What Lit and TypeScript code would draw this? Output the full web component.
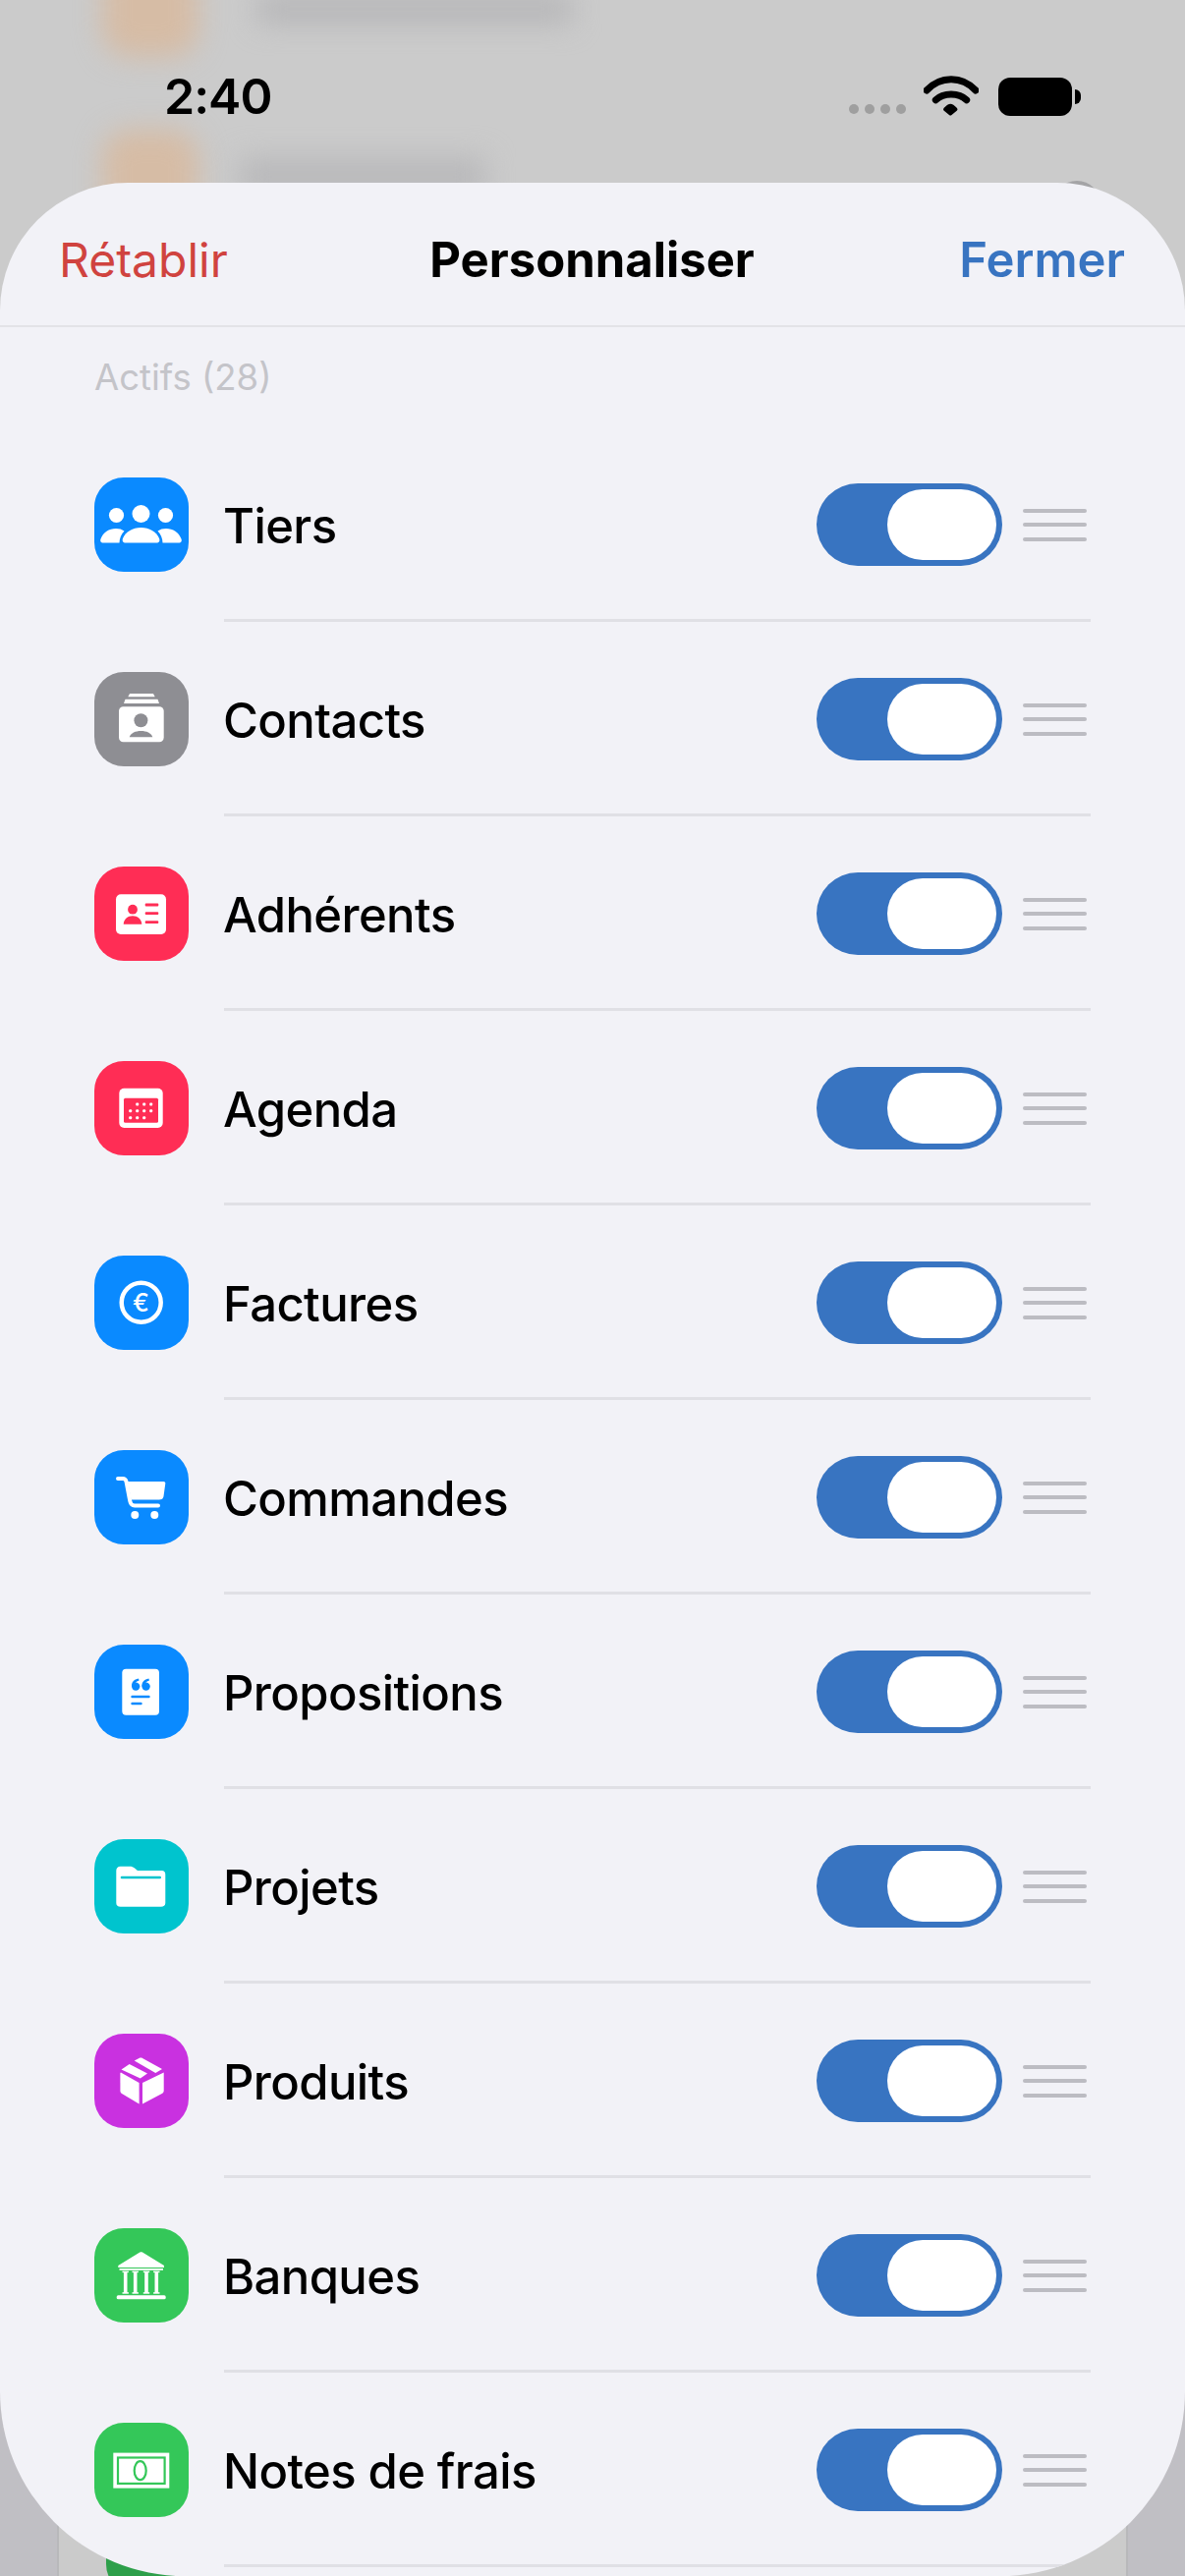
import { LitElement, css, html, svg } from "lit";
import { customElement } from "lit/decorators.js";

// Glyphs are drawn on the 96x96 tile; .cut pieces take the tile colour.
const peopleIcon = svg`
  <circle cx="47.5" cy="37" r="9"/>
  <circle cx="22.5" cy="38.5" r="7.6"/>
  <circle cx="72.5" cy="38.5" r="7.6"/>
  <path d="M32 66.5H63C66 66.5 67 64.5 66 62C63 55 56 51 47.5 51C39 51 32 55 29 62C28 64.5 29 66.5 32 66.5Z"/>
  <path d="M9 66.5H25.5C25.5 62 27.5 57.5 30.5 54.5C28 52.8 25.5 52 22 52C15 52 9 56 6.5 62.5C5.5 65 7 66.5 9 66.5Z"/>
  <path d="M86 66.5H69.5C69.5 62 67.5 57.5 64.5 54.5C67 52.8 69.5 52 73 52C80 52 86 56 88.5 62.5C89.5 65 88 66.5 86 66.5Z"/>
`;

const contactsIcon = svg`
  <path d="M36 22H60L61.7 25.3H34.3Z"/>
  <path d="M31.5 27.8H64.5L66 32H30Z"/>
  <rect x="25" y="35.3" width="45.7" height="36" rx="4.5"/>
  <circle class="cut" cx="47.4" cy="49.3" r="7"/>
  <path class="cut" d="M35.7 66.3C37 62 42 60 47.5 60C53 60 58 62 59.3 66.3Z"/>
`;

const memberCardIcon = svg`
  <rect x="22" y="28.3" width="51" height="40.7" rx="5"/>
  <circle class="cut" cx="39" cy="43.7" r="4.9"/>
  <path class="cut" d="M29.7 58.7C30 53.5 34 50.3 39 50.3C44 50.3 48 53.5 48.3 58.7Z"/>
  <rect class="cut" x="51.7" y="37.6" width="13.6" height="2.8" rx="1"/>
  <rect class="cut" x="51.7" y="46.3" width="13.6" height="2.8" rx="1"/>
  <rect class="cut" x="51.7" y="55.3" width="13.6" height="2.8" rx="1"/>
`;

const calendarDots: [number, number][] = [
  [43.7, 44], [50.7, 44], [57.7, 44],
  [36.7, 50.7], [43.7, 50.7], [50.7, 50.7], [57.7, 50.7],
  [36.7, 57.7], [43.7, 57.7], [50.7, 57.7],
];

const calendarIcon = svg`
  <rect x="25.3" y="27.7" width="44.4" height="40.3" rx="5"/>
  <rect class="cut" x="30" y="37.7" width="35" height="25" rx="1.5"/>
  ${calendarDots.map(([x, y]) => svg`<rect x=${x - 1.5} y=${y - 1.5} width="3" height="3" rx="1"/>`)}
`;

const euroIcon = svg`
  <circle class="ring" cx="47.7" cy="47.7" r="20"/>
  <text class="euro" x="47.4" y="56.5" text-anchor="middle">€</text>
`;

const cartIcon = svg`
  <path class="line" d="M24 29H29C31 29 32 30 32.5 32L36.3 52C36.9 55 38.5 56.5 41 56.5H65"/>
  <path d="M34 32H70.5C71.7 32 72.5 33 72.3 34L70.5 47C70 49.5 68.5 50.5 66 50.5H37.5Z"/>
  <circle cx="41.3" cy="66" r="4"/>
  <circle cx="61.3" cy="66" r="4"/>
`;

const quoteIcon = svg`
  <rect x="28.3" y="24.7" width="37.7" height="47" rx="4"/>
  <circle class="cut" cx="42.2" cy="42.6" r="4.2"/>
  <circle class="cut" cx="52.6" cy="42.6" r="4.2"/>
  <path class="cut" d="M38 42.6C37.8 38.4 40.2 35.4 45 34.6L45.6 36.6C42.8 37.4 41.2 39 41.2 41.5Z"/>
  <path class="cut" d="M48.4 42.6C48.2 38.4 50.6 35.4 55.4 34.6L56 36.6C53.2 37.4 51.6 39 51.6 41.5Z"/>
  <rect class="cut" x="37.3" y="51.8" width="19.4" height="2.5" rx="1.2"/>
  <rect class="cut" x="37.3" y="58.8" width="11.4" height="2.5" rx="1.2"/>
`;

const folderIcon = svg`
  <path d="M22.3 32C22.3 29.5 24 27.7 26.5 27.7H36C38 27.7 39.5 28.3 41 29.5L44 32H68.5C71 32 72.3 33.5 72.3 36V65C72.3 67.5 70.5 68.7 68 68.7H26.5C24 68.7 22.3 67.5 22.3 65Z"/>
  <rect class="cut" x="26.7" y="37.8" width="41.3" height="2.5" rx="1.2"/>
`;

const boxIcon = svg`
  <path d="M27 39.5L45.6 50V71.5L28 61C27 60.4 26.4 59.4 26.4 58.3V40Z"/>
  <path d="M70.7 39.5L49 50V71.5L68.8 61C70 60.4 70.7 59.4 70.7 58.3Z"/>
  <path d="M27.5 36.5L35.7 31L54 40.5L46.8 45.5Z"/>
  <path d="M40.7 27.5L45.5 25C46.7 24.4 48 24.4 49 25L69 36L62.3 40Z"/>
`;

const bankColumns = [31.7, 41.7, 53, 63.3];

const bankIcon = svg`
  <path d="M46.3 24.5C47.2 24 48.2 24 49 24.5L71 38V40H24.3V38Z"/>
  <rect x="25.5" y="41" width="44.5" height="1.8"/>
  ${bankColumns.map(
    (x) => svg`
      <rect x=${x - 1.8} y="44" width="3.6" height="22"/>
      <rect x=${x - 3.2} y="43.6" width="6.4" height="1.5"/>
      <rect x=${x - 3.2} y="65.2" width="6.4" height="1.5"/>
    `
  )}
  <rect x="22.7" y="68.3" width="50" height="4" rx="1.6"/>
`;

const billIcon = svg`
  <rect x="19.3" y="30.6" width="57" height="36"/>
  <rect class="cut-line" x="24" y="35.5" width="47.6" height="26.4"/>
  <ellipse class="cut-line" cx="46.7" cy="48.7" rx="6" ry="9.5"/>
`;

type Tone = "blue" | "gray" | "pink" | "teal" | "purple" | "green";

const modules: { label: string; tone: Tone; icon: unknown }[] = [
  { label: "Tiers", tone: "blue", icon: peopleIcon },
  { label: "Contacts", tone: "gray", icon: contactsIcon },
  { label: "Adhérents", tone: "pink", icon: memberCardIcon },
  { label: "Agenda", tone: "pink", icon: calendarIcon },
  { label: "Factures", tone: "blue", icon: euroIcon },
  { label: "Commandes", tone: "blue", icon: cartIcon },
  { label: "Propositions", tone: "blue", icon: quoteIcon },
  { label: "Projets", tone: "teal", icon: folderIcon },
  { label: "Produits", tone: "purple", icon: boxIcon },
  { label: "Banques", tone: "green", icon: bankIcon },
  { label: "Notes de frais", tone: "green", icon: billIcon },
];

@customElement("app-root")
export class AppRoot extends LitElement {
  static styles = css`
    :host {
      display: block;
      font-family: Inter, "Noto Sans", sans-serif;
    }

    * {
      box-sizing: border-box;
    }

    .screen {
      position: relative;
      height: 2622px;
      overflow: hidden;
      background: #cbcbcb;
      color: #000;
    }

    /* dimmed page that sits behind the sheet */
    .behind {
      position: absolute;
      inset: 0;
    }

    .smear {
      position: absolute;
      filter: blur(14px);
    }

    .smear.tile-a {
      left: 104px;
      top: -40px;
      width: 98px;
      height: 98px;
      border-radius: 28px;
      background: #d6bca5;
    }

    .smear.tile-b {
      left: 104px;
      top: 132px;
      width: 98px;
      height: 98px;
      border-radius: 28px;
      background: #d6bca5;
    }

    .smear.text-a {
      left: 262px;
      top: -6px;
      width: 320px;
      height: 30px;
      background: #b6b6b8;
    }

    .smear.text-b {
      left: 244px;
      top: 160px;
      width: 250px;
      height: 40px;
      background: #b9b9bb;
    }

    .peek {
      position: absolute;
      left: 1072px;
      top: 184px;
      width: 48px;
      height: 48px;
      border-radius: 50%;
      background: #a4a4a6;
    }

    .gutter {
      position: absolute;
      top: 2300px;
      bottom: 0;
      width: 60px;
      background: #c0bfc4;
    }

    .gutter.left {
      left: 0;
      border-right: 2px solid #b8b8bb;
    }

    .gutter.right {
      right: 0;
      border-left: 2px solid #b8b8bb;
    }

    .green-tab {
      position: absolute;
      left: 108px;
      top: 2500px;
      width: 200px;
      height: 140px;
      border-radius: 30px;
      background: #2d9f4a;
    }

    .status {
      position: relative;
      height: 186px;
      display: flex;
      align-items: flex-start;
      justify-content: space-between;
      padding: 68px 106px 0 167px;
    }

    .time {
      font-size: 50px;
      line-height: 60px;
      font-weight: 600;
      letter-spacing: -1px;
    }

    .indicators {
      display: flex;
      align-items: flex-start;
      margin-top: 9px;
    }

    .dots {
      display: flex;
      gap: 6px;
      margin: 29px 18px 0 0;
    }

    .dots i {
      width: 10px;
      height: 10px;
      border-radius: 50%;
      background: #9f9f9f;
    }

    .wifi {
      width: 56px;
      height: 42px;
      margin-right: 20px;
    }

    .battery {
      width: 75px;
      height: 39px;
      margin-top: 2px;
      border-radius: 12px;
      background: #000;
    }

    .battery-cap {
      width: 6px;
      height: 15px;
      margin: 14px 0 0 3px;
      border-radius: 0 8px 8px 0;
      background: #000;
    }

    .sheet {
      position: relative;
      height: 2436px;
      overflow: hidden;
      border-radius: 130px 130px 188px 188px;
      background: #f2f2f7;
    }

    .bar {
      height: 147px;
      display: grid;
      grid-template-columns: 1fr auto 1fr;
      align-items: center;
      padding: 12px 61px 0 60px;
      border-bottom: 2px solid #e3e3e7;
      font-size: 49px;
    }

    .reset {
      font-size: 48px;
      color: #d0433f;
      font-weight: 400;
    }

    .title {
      font-weight: 700;
    }

    .close {
      justify-self: end;
      color: #3874c1;
      font-weight: 600;
    }

    .section {
      height: 102px;
      padding: 24px 0 0 96px;
      font-size: 36.5px;
      line-height: 54px;
      color: #c4c4c9;
    }

    .row {
      height: 198px;
      display: flex;
      gap: 36px;
      padding: 0 96px;
      align-items: center;
    }

    .tile {
      flex: none;
      width: 96px;
      height: 96px;
      border-radius: 30px;
      background: var(--tone);
    }

    .tile svg {
      display: block;
      width: 96px;
      height: 96px;
      fill: #fff;
    }

    .tile .cut {
      fill: var(--tone);
    }

    .tile .cut-line {
      fill: none;
      stroke: var(--tone);
      stroke-width: 2.2;
    }

    .tile .line {
      fill: none;
      stroke: #fff;
      stroke-width: 4;
      stroke-linecap: round;
    }

    .tile .ring {
      fill: none;
      stroke: #fff;
      stroke-width: 4.5;
    }

    .tile .euro {
      font-size: 25px;
      font-weight: 500;
    }

    .blue {
      --tone: #0a8aff;
    }

    .gray {
      --tone: #8e8e93;
    }

    .pink {
      --tone: #ff2d55;
    }

    .teal {
      --tone: #00c4ce;
    }

    .purple {
      --tone: #c931e0;
    }

    .green {
      --tone: #34c759;
    }

    .row-body {
      flex: 1;
      height: 198px;
      display: flex;
      align-items: center;
      padding-top: 3px;
      border-bottom: 3px solid #e0e0e5;
    }

    .label {
      flex: 1;
      padding-top: 3px;
      margin-left: -1px;
      font-size: 49px;
      font-weight: 500;
      letter-spacing: -0.6px;
    }

    .toggle {
      width: 189px;
      height: 84px;
      display: flex;
      justify-content: flex-end;
      padding: 6px;
      border-radius: 42px;
      background: #3874c1;
    }

    .toggle i {
      width: 111px;
      height: 72px;
      border-radius: 36px;
      background: #fff;
    }

    .grip {
      width: 65px;
      display: flex;
      flex-direction: column;
      gap: 10.5px;
      margin: 0 4px 0 21px;
    }

    .grip i {
      height: 4px;
      border-radius: 2px;
      background: #bcbcc2;
    }
  `;

  render() {
    return html`
      <div class="screen">
        <div class="behind">
          <div class="smear tile-a"></div>
          <div class="smear tile-b"></div>
          <div class="smear text-a"></div>
          <div class="smear text-b"></div>
          <div class="peek"></div>
          <div class="gutter left"></div>
          <div class="gutter right"></div>
          <div class="green-tab"></div>
        </div>

        <div class="status">
          <span class="time">2:40</span>
          <div class="indicators">
            <div class="dots"><i></i><i></i><i></i><i></i></div>
            <svg class="wifi" viewBox="0 0 56 42">
              <path d="M3 15C17 0 39 0 53 15" fill="none" stroke="#000" stroke-width="7" stroke-linecap="round" />
              <path d="M12.3 24.7C20 17 36 17 43.7 24.7" fill="none" stroke="#000" stroke-width="7" stroke-linecap="round" />
              <path d="M27.3 28.7Q30 28.7 34 33Q35 34.5 34 35.5L28.5 40Q27.3 41 26 40L20.5 35.5Q19.5 34.5 20.5 33Q24.5 28.7 27.3 28.7Z" />
            </svg>
            <div class="battery"></div>
            <div class="battery-cap"></div>
          </div>
        </div>

        <div class="sheet">
          <div class="bar">
            <span class="reset">Rétablir</span>
            <span class="title">Personnaliser</span>
            <span class="close">Fermer</span>
          </div>
          <div class="section">Actifs (28)</div>
          ${modules.map(
            (item) => html`
              <div class="row">
                <div class="tile ${item.tone}">
                  <svg viewBox="0 0 96 96">${item.icon}</svg>
                </div>
                <div class="row-body">
                  <span class="label">${item.label}</span>
                  <div class="toggle"><i></i></div>
                  <div class="grip"><i></i><i></i><i></i></div>
                </div>
              </div>
            `
          )}
        </div>
      </div>
    `;
  }
}
